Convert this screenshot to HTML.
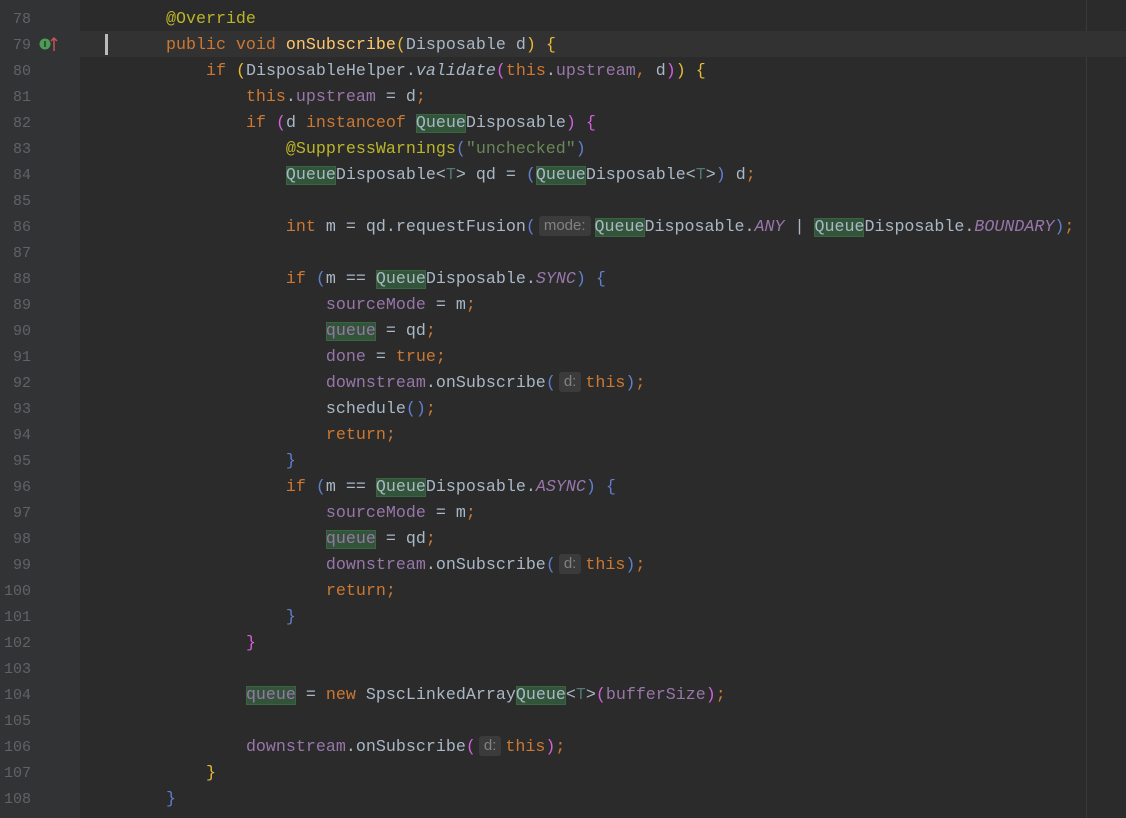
<!DOCTYPE html>
<html><head><meta charset="utf-8"><style>
html,body{margin:0;padding:0;background:#2b2b2b;width:1126px;height:818px;overflow:hidden}
.gut{position:absolute;left:0;top:0;width:80px;height:818px;background:#313335}
.rm{position:absolute;left:1086px;top:0;width:1px;height:818px;background:#3a3a3a}
.cur{position:absolute;left:80px;top:31px;width:1046px;height:26px;background:#323232}
.ln{position:absolute;left:0;width:31px;text-align:right;color:#606366;font:15px "Liberation Mono",monospace;line-height:26px}
.c{position:absolute;left:86px;white-space:pre;font:16.67px "Liberation Mono",monospace;line-height:26px;color:#a9b7c6}
.k{color:#cc7832}.a{color:#bbb529}.m{color:#ffc66d}.f{color:#9876aa}.s{color:#6a8759}
.i{font-style:italic}.sf{color:#9876aa;font-style:italic}
.y{color:#e8ba36}.p{color:#d55fde}.b{color:#5f7fd0}.t{color:#507874}
.h{background:#32553a;box-shadow:inset 0 0 0 1px #3b6443}
.hint{display:inline-block;background:#3b3b3b;color:#828282;font:15px "Liberation Sans",sans-serif;line-height:20px;padding:0 5px;border-radius:3px;margin:0 4px 0 3px;vertical-align:1px}
</style></head><body>
<div class="gut"></div><div class="rm"></div><div class="cur"></div>
<div style="position:absolute;left:105px;top:34px;width:3px;height:21px;background:#bbb"></div>
<svg style="position:absolute;left:38px;top:36px" width="22" height="16"><circle cx="7" cy="8" r="5.5" fill="#4e9a56"/><rect x="6.3" y="5" width="1.4" height="6" fill="#1e3a20"/><path d="M16 15V2M13 5l3-3 3 3" stroke="#c75450" stroke-width="1.5" fill="none"/></svg>
<div id="g"></div>
<script>
var L=[
'        <span class="a">@Override</span>',
'        <span class="k">public void </span><span class="m">onSubscribe</span><span class="y">(</span>Disposable d<span class="y">)</span> <span class="y">{</span>',
'            <span class="k">if </span><span class="y">(</span>DisposableHelper.<span class="i">validate</span><span class="p">(</span><span class="k">this</span>.<span class="f">upstream</span><span class="k">, </span>d<span class="p">)</span><span class="y">)</span> <span class="y">{</span>',
'                <span class="k">this</span>.<span class="f">upstream </span>= d<span class="k">;</span>',
'                <span class="k">if </span><span class="p">(</span>d <span class="k">instanceof </span><span class="h">Queue</span>Disposable<span class="p">)</span> <span class="p">{</span>',
'                    <span class="a">@SuppressWarnings</span><span class="b">(</span><span class="s">"unchecked"</span><span class="b">)</span>',
'                    <span class="h">Queue</span>Disposable&lt;<span class="t">T</span>&gt; qd = <span class="b">(</span><span class="h">Queue</span>Disposable&lt;<span class="t">T</span>&gt;<span class="b">)</span> d<span class="k">;</span>',
'',
'                    <span class="k">int </span>m = qd.requestFusion<span class="b">(</span><span class="hint">mode:</span><span class="h">Queue</span>Disposable.<span class="sf">ANY</span> | <span class="h">Queue</span>Disposable.<span class="sf">BOUNDARY</span><span class="b">)</span><span class="k">;</span>',
'',
'                    <span class="k">if </span><span class="b">(</span>m == <span class="h">Queue</span>Disposable.<span class="sf">SYNC</span><span class="b">)</span> <span class="b">{</span>',
'                        <span class="f">sourceMode </span>= m<span class="k">;</span>',
'                        <span class="f h">queue</span> = qd<span class="k">;</span>',
'                        <span class="f">done </span>= <span class="k">true;</span>',
'                        <span class="f">downstream</span>.onSubscribe<span class="b">(</span><span class="hint">d:</span><span class="k">this</span><span class="b">)</span><span class="k">;</span>',
'                        schedule<span class="b">()</span><span class="k">;</span>',
'                        <span class="k">return;</span>',
'                    <span class="b">}</span>',
'                    <span class="k">if </span><span class="b">(</span>m == <span class="h">Queue</span>Disposable.<span class="sf">ASYNC</span><span class="b">)</span> <span class="b">{</span>',
'                        <span class="f">sourceMode </span>= m<span class="k">;</span>',
'                        <span class="f h">queue</span> = qd<span class="k">;</span>',
'                        <span class="f">downstream</span>.onSubscribe<span class="b">(</span><span class="hint">d:</span><span class="k">this</span><span class="b">)</span><span class="k">;</span>',
'                        <span class="k">return;</span>',
'                    <span class="b">}</span>',
'                <span class="p">}</span>',
'',
'                <span class="f h">queue</span> = <span class="k">new </span>SpscLinkedArray<span class="h">Queue</span>&lt;<span class="t">T</span>&gt;<span class="p">(</span><span class="f">bufferSize</span><span class="p">)</span><span class="k">;</span>',
'',
'                <span class="f">downstream</span>.onSubscribe<span class="p">(</span><span class="hint">d:</span><span class="k">this</span><span class="p">)</span><span class="k">;</span>',
'            <span class="y">}</span>',
'        <span class="b">}</span>'
];
var h='';
for(var k=0;k<L.length;k++){var t=7+26*k;
h+='<div class="ln" style="top:'+t+'px">'+(78+k)+'</div><div class="c" style="top:'+t+'px">'+L[k]+'</div>';}
document.getElementById('g').innerHTML=h;
</script>
</body></html>
